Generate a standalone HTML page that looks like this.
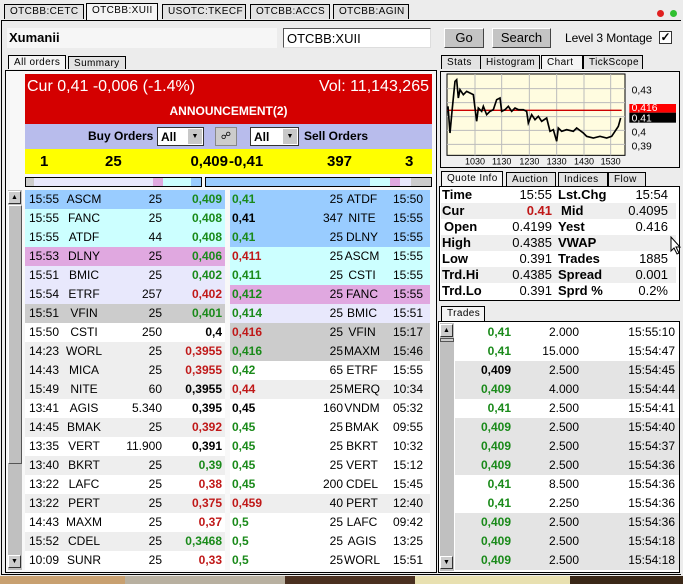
<!DOCTYPE html>
<html><head><meta charset="utf-8"><style>
*{margin:0;padding:0;box-sizing:border-box}
body{width:683px;height:584px;overflow:hidden;background:#ececec;font-family:"Liberation Sans",sans-serif;font-size:12px;color:#000;position:relative}
.a{position:absolute}
.tab{position:absolute;height:15px;border:1px solid #000;border-bottom:none;background:#e2e2e2;font-size:10px;letter-spacing:.4px;padding:1px 0 0 5px;line-height:12px;overflow:hidden;white-space:nowrap}
.tab.on{background:#f4f4f4}
.btn{position:absolute;background:#c4c4c4;border:1px solid;border-color:#fff #444 #444 #fff;font-size:13px;text-align:center;line-height:18px}
.r{position:absolute;height:19px;line-height:19px;font-size:12px;white-space:nowrap}
.r span{position:absolute}
.g{color:#1a8a1a;font-weight:bold}.rd{color:#c01818;font-weight:bold}.k{font-weight:bold;color:#000}
.q{position:absolute;left:441px;width:235px;height:16px;line-height:16px;font-size:13px}
.q span{position:absolute}
.sb{position:absolute;background:#c0c0c0}
.arr{position:absolute;width:13px;height:13px;background:#ccc;border:1px solid;border-color:#fff #333 #333 #fff;font-size:7px;text-align:center;line-height:11px}
</style></head><body>
<div class="tab" style="left:4px;top:4px;width:80px">OTCBB:CETC</div>
<div class="tab on" style="left:86px;top:3px;width:72px;height:17px">OTCBB:XUII</div>
<div class="tab" style="left:162px;top:4px;width:84px">USOTC:TKECF</div>
<div class="tab" style="left:250px;top:4px;width:80px">OTCBB:ACCS</div>
<div class="tab" style="left:333px;top:4px;width:76px">OTCBB:AGIN</div>
<div class="a" style="left:657px;top:10px;width:7px;height:7px;border-radius:50%;background:#e02020"></div>
<div class="a" style="left:670px;top:10px;width:7px;height:7px;border-radius:50%;background:#30c030"></div>
<div class="a" style="left:1px;top:20px;width:680px;height:555px;border:1px solid #000;border-right:none"></div>
<div class="a" style="left:7px;top:28px;width:270px;height:20px;background:#f6f6f6"></div>
<div class="a" style="left:9px;top:30px;font-weight:bold;font-size:13px">Xumanii</div>
<div class="a" style="left:283px;top:28px;width:148px;height:20px;background:#fff;border:1px solid;border-color:#555 #ddd #ddd #555;font-size:13px;padding:2px 3px">OTCBB:XUII</div>
<div class="btn" style="left:444px;top:28px;width:40px;height:20px">Go</div>
<div class="btn" style="left:492px;top:28px;width:59px;height:20px">Search</div>
<div class="a" style="left:565px;top:31px;font-size:12px;letter-spacing:-.1px">Level 3 Montage</div>
<div class="a" style="left:659px;top:31px;width:13px;height:13px;background:#fff;border:1px solid #333;font-size:12px;line-height:11px;text-align:center;font-weight:bold">✓</div>
<div class="tab on" style="left:8px;top:55px;width:58px;height:14px">All orders</div>
<div class="tab" style="left:68px;top:56px;width:58px;height:13px">Summary</div>
<div class="tab" style="left:441px;top:55px;width:40px;height:14px">Stats</div>
<div class="tab" style="left:480px;top:55px;width:60px;height:14px">Histogram</div>
<div class="tab on" style="left:541px;top:55px;width:42px;height:14px">Chart</div>
<div class="tab" style="left:583px;top:55px;width:60px;height:14px">TickScope</div>
<div class="a" style="left:5px;top:70px;width:432px;height:503px;border:1px solid #000;background:#f8f8f8"></div>
<div class="a" style="left:25px;top:74px;width:407px;height:50px;background:#d40000;color:#fff">
<div class="a" style="left:2px;top:4px;font-size:16px">Cur 0,41 -0,006 (-1.4%)</div>
<div class="a" style="right:3px;top:4px;font-size:16px">Vol: 11,143,265</div>
<div class="a" style="left:0;width:407px;top:30px;text-align:center;font-weight:bold;font-size:12px">ANNOUNCEMENT(2)</div>
</div>
<div class="a" style="left:25px;top:124px;width:407px;height:25px;background:#b8bcec"></div>
<div class="a" style="left:88px;top:129px;font-weight:bold;font-size:12px">Buy Orders</div>
<div class="a" style="left:157px;top:127px;width:47px;height:19px;background:#fff;border:1px solid #333;font-weight:bold;font-size:12px;padding:2px 3px">All<div class="a" style="right:1px;top:1px;width:14px;height:15px;background:#c8c8c8;font-size:7px;text-align:center;line-height:15px">▼</div></div>
<div class="a" style="left:215px;top:127px;width:22px;height:19px;background:#ccc;border:1px solid #888;font-size:10px;text-align:center;line-height:17px">☍</div>
<div class="a" style="left:250px;top:127px;width:49px;height:19px;background:#fff;border:1px solid #333;font-weight:bold;font-size:12px;padding:2px 3px">All<div class="a" style="right:1px;top:1px;width:14px;height:15px;background:#c8c8c8;font-size:7px;text-align:center;line-height:15px">▼</div></div>
<div class="a" style="left:304px;top:129px;font-weight:bold;font-size:12px">Sell Orders</div>
<div class="a" style="left:25px;top:149px;width:407px;height:25px;background:#ffff00;font-size:15px;font-weight:bold">
<span class="a" style="left:15px;top:4px">1</span><span class="a" style="left:80px;top:4px">25</span><span class="a" style="right:204px;top:4px">0,409</span><span class="a" style="left:204px;top:4px">-0,41</span><span class="a" style="left:302px;top:4px">397</span><span class="a" style="left:380px;top:4px">3</span></div>
<div class="a" style="left:25px;top:177px;width:177px;height:10px;border:1px solid #000;background:linear-gradient(90deg,#ccc 0 8px,#e8e8fc 8px 127px,#e0a8e0 127px 137px,#ccffff 137px 165px,#99ccff 165px)"></div>
<div class="a" style="left:205px;top:177px;width:227px;height:10px;border:1px solid #000;background:linear-gradient(90deg,#99ccff 0 164px,#ccffff 164px 184px,#e0a8e0 184px 194px,#e8e8fc 194px 205px,#ccc 205px)"></div>
<div class="sb" style="left:8px;top:190px;width:14px;height:380px"></div>
<div class="arr" style="left:8px;top:191px">▲</div>
<div class="a" style="left:8px;top:205px;width:14px;height:259px;background:#c0c0c0;border:1px solid;border-color:#fff #555 #555 #fff"></div>
<div class="arr" style="left:8px;top:555px">▼</div>
<div id="rows"></div>
<div class="a" style="left:440px;top:71px;width:240px;height:97px;border:1px solid #000;background:#f0f0f0"></div>
<svg class="a" style="left:440px;top:68px" width="240" height="100" viewBox="0 0 720 300">
<rect x="21" y="18" width="534" height="244" fill="#fffce0" stroke="#000" stroke-width="3"/>
<g stroke="#bbb" stroke-width="3">
<line x1="105" y1="18" x2="105" y2="262"/><line x1="185" y1="18" x2="185" y2="262"/><line x1="268" y1="18" x2="268" y2="262"/><line x1="350" y1="18" x2="350" y2="262"/><line x1="432" y1="18" x2="432" y2="262"/><line x1="512" y1="18" x2="512" y2="262"/>
<line x1="21" y1="62" x2="555" y2="62"/><line x1="21" y1="104" x2="555" y2="104"/><line x1="21" y1="146" x2="555" y2="146"/><line x1="21" y1="187" x2="555" y2="187"/><line x1="21" y1="229" x2="555" y2="229"/></g>
<line x1="21" y1="127" x2="545" y2="127" stroke="#c00" stroke-width="4"/>
<polyline fill="none" stroke="#000" stroke-width="5" points="24,115 30,195 36,130 45,40 50,35 55,90 60,65 70,80 80,70 90,75 100,80 110,160 115,120 125,130 130,115 140,140 150,130 160,125 170,95 180,90 185,130 195,125 205,115 215,130 225,120 235,125 250,125 260,130 265,165 275,140 285,155 295,145 305,160 320,150 330,190 340,185 350,220 355,180 365,190 380,185 400,190 410,180 430,195 440,205 460,210 480,205 500,210 515,205 525,190 535,175 542,150"/>
<rect x="568" y="108" width="140" height="26" fill="#f00"/><rect x="568" y="134" width="140" height="30" fill="#000"/>
<g font-family="Liberation Sans" font-size="31">
<text x="575" y="77">0,43</text><text x="575" y="129" fill="#fff">0,416</text><text x="575" y="160" fill="#fff">0,41</text><text x="575" y="202">0,4</text><text x="575" y="244">0,39</text></g>
<g font-family="Liberation Sans" font-size="27" text-anchor="middle">
<text x="105" y="290">1030</text><text x="185" y="290">1130</text><text x="268" y="290">1230</text><text x="350" y="290">1330</text><text x="432" y="290">1430</text><text x="512" y="290">1530</text></g>
</svg>
<div class="tab on" style="left:441px;top:171px;width:62px;height:15px">Quote Info</div>
<div class="tab" style="left:506px;top:172px;width:50px;height:14px">Auction</div>
<div class="tab" style="left:558px;top:172px;width:50px;height:14px">Indices</div>
<div class="tab" style="left:608px;top:172px;width:38px;height:14px">Flow</div>
<div class="a" style="left:439px;top:186px;width:241px;height:115px;border:1px solid #000;background:#fff"></div>
<div class="q" style="top:187px"><span style="left:1px;font-weight:bold">Time</span><span style="right:124px">15:55</span><span style="left:117px;font-weight:bold">Lst.Chg</span><span style="right:8px">15:54</span></div>
<div class="q" style="top:203px;background:#eee"><span style="left:1px;font-weight:bold">Cur</span><span style="right:124px;color:#c01818;font-weight:bold">0.41</span><span style="left:120px;font-weight:bold">Mid</span><span style="right:8px">0.4095</span></div>
<div class="q" style="top:219px"><span style="left:3px;font-weight:bold">Open</span><span style="right:124px">0.4199</span><span style="left:117px;font-weight:bold">Yest</span><span style="right:8px">0.416</span></div>
<div class="q" style="top:235px;background:#eee"><span style="left:1px;font-weight:bold">High</span><span style="right:124px">0.4385</span><span style="left:117px;font-weight:bold">VWAP</span></div>
<div class="q" style="top:251px"><span style="left:1px;font-weight:bold">Low</span><span style="right:124px">0.391</span><span style="left:117px;font-weight:bold">Trades</span><span style="right:8px">1885</span></div>
<div class="q" style="top:267px;background:#eee"><span style="left:1px;font-weight:bold">Trd.Hi</span><span style="right:124px">0.4385</span><span style="left:117px;font-weight:bold">Spread</span><span style="right:8px">0.001</span></div>
<div class="q" style="top:283px"><span style="left:1px;font-weight:bold">Trd.Lo</span><span style="right:124px">0.391</span><span style="left:117px;font-weight:bold">Sprd %</span><span style="right:8px">0.2%</span></div>
<svg class="a" style="left:670px;top:236px" width="12" height="20"><path d="M1 1 L1 15 L4 12 L7 18 L9 17 L6 11 L10 11 Z" fill="#fff" stroke="#000"/></svg>
<div class="tab on" style="left:441px;top:306px;width:44px;height:15px">Trades</div>
<div class="a" style="left:438px;top:321px;width:242px;height:252px;border:1px solid #000;background:#fff"></div>
<div class="sb" style="left:440px;top:323px;width:14px;height:248px"></div>
<div class="arr" style="left:440px;top:324px">▲</div>
<div class="a" style="left:440px;top:338px;width:14px;height:4px;border:1px solid #555;background:#ccc"></div>
<div class="arr" style="left:440px;top:556px">▼</div>
<div id="tr"></div>
<div class="a" style="left:0;top:576px;width:683px;height:8px;background:linear-gradient(90deg,#c8a070 0 125px,#b8b0a0 125px 285px,#4a3020 285px 415px,#e8e0b0 415px 570px,#3a2818 570px)"></div>
<script>
var B=[["15:55","ASCM","25","0,409","g","#99ccff"],["15:55","FANC","25","0,408","g","#ccffff"],["15:55","ATDF","44","0,408","g","#ccffff"],["15:53","DLNY","25","0,406","g","#e0a8e0"],["15:51","BMIC","25","0,402","g","#e8e8fc"],["15:54","ETRF","257","0,402","rd","#e8e8fc"],["15:51","VFIN","25","0,401","g","#cccccc"],["15:50","CSTI","250","0,4","k","#fff"],["14:23","WORL","25","0,3955","rd","#eee"],["14:43","MICA","25","0,3955","rd","#eee"],["15:49","NITE","60","0,3955","k","#eee"],["13:41","AGIS","5.340","0,395","k","#fff"],["14:45","BMAK","25","0,392","rd","#eee"],["13:35","VERT","11.900","0,391","k","#fff"],["13:40","BKRT","25","0,39","g","#eee"],["13:22","LAFC","25","0,38","rd","#fff"],["13:22","PERT","25","0,375","rd","#eee"],["14:43","MAXM","25","0,37","rd","#fff"],["15:52","CDEL","25","0,3468","g","#eee"],["10:09","SUNR","25","0,33","rd","#fff"]];
var S=[["0,41","g","25","ATDF","15:50","#99ccff"],["0,41","k","347","NITE","15:55","#99ccff"],["0,41","g","25","DLNY","15:55","#99ccff"],["0,411","rd","25","ASCM","15:55","#ccffff"],["0,411","g","25","CSTI","15:55","#ccffff"],["0,412","g","25","FANC","15:55","#e0a8e0"],["0,414","g","25","BMIC","15:51","#e8e8fc"],["0,416","rd","25","VFIN","15:17","#cccccc"],["0,416","g","25","MAXM","15:46","#cccccc"],["0,42","g","65","ETRF","15:55","#fff"],["0,44","rd","25","MERQ","10:34","#eee"],["0,45","k","160","VNDM","05:32","#fff"],["0,45","g","25","BMAK","09:55","#fff"],["0,45","g","25","BKRT","10:32","#fff"],["0,45","g","25","VERT","15:12","#fff"],["0,45","g","200","CDEL","15:45","#fff"],["0,459","rd","40","PERT","12:40","#eee"],["0,5","g","25","LAFC","09:42","#fff"],["0,5","g","25","AGIS","13:25","#fff"],["0,5","g","25","WORL","15:51","#fff"]];
var h="";
for(var i=0;i<20;i++){var b=B[i],s=S[i],y=190+i*19;
h+='<div class="r" style="left:25px;top:'+y+'px;width:200px;background:'+b[5]+'"><span style="left:4px">'+b[0]+'</span><span style="left:39px;width:40px;text-align:center">'+b[1]+'</span><span style="right:63px">'+b[2]+'</span><span class="'+b[4]+'" style="right:3px">'+b[3]+'</span></div>';
h+='<div class="r" style="left:230px;top:'+y+'px;width:200px;background:'+s[5]+'"><span class="'+s[1]+'" style="left:2px">'+s[0]+'</span><span style="right:87px">'+s[2]+'</span><span style="left:114px;width:36px;text-align:center">'+s[3]+'</span><span style="right:7px">'+s[4]+'</span></div>';}
document.getElementById("rows").innerHTML=h;
var T=[["0,41","g","2.000","15:55:10","#fff"],["0,41","g","15.000","15:54:47","#fff"],["0,409","k","2.500","15:54:45","#e4e4e4"],["0,409","g","4.000","15:54:44","#e4e4e4"],["0,41","g","2.500","15:54:41","#fff"],["0,409","g","2.500","15:54:40","#e4e4e4"],["0,409","g","2.500","15:54:37","#e4e4e4"],["0,409","g","2.500","15:54:36","#e4e4e4"],["0,41","g","8.500","15:54:36","#fff"],["0,41","g","2.250","15:54:36","#fff"],["0,409","g","2.500","15:54:36","#e4e4e4"],["0,409","g","2.500","15:54:18","#e4e4e4"],["0,409","g","2.500","15:54:18","#e4e4e4"]];
h="";
for(var j=0;j<13;j++){var t=T[j];h+='<div class="r" style="left:455px;top:'+(323+j*19)+'px;width:224px;background:'+t[4]+'"><span class="'+t[1]+'" style="right:168px">'+t[0]+'</span><span style="right:100px">'+t[2]+'</span><span style="right:4px">'+t[3]+'</span></div>';}
document.getElementById("tr").innerHTML=h;
</script>
</body></html>
